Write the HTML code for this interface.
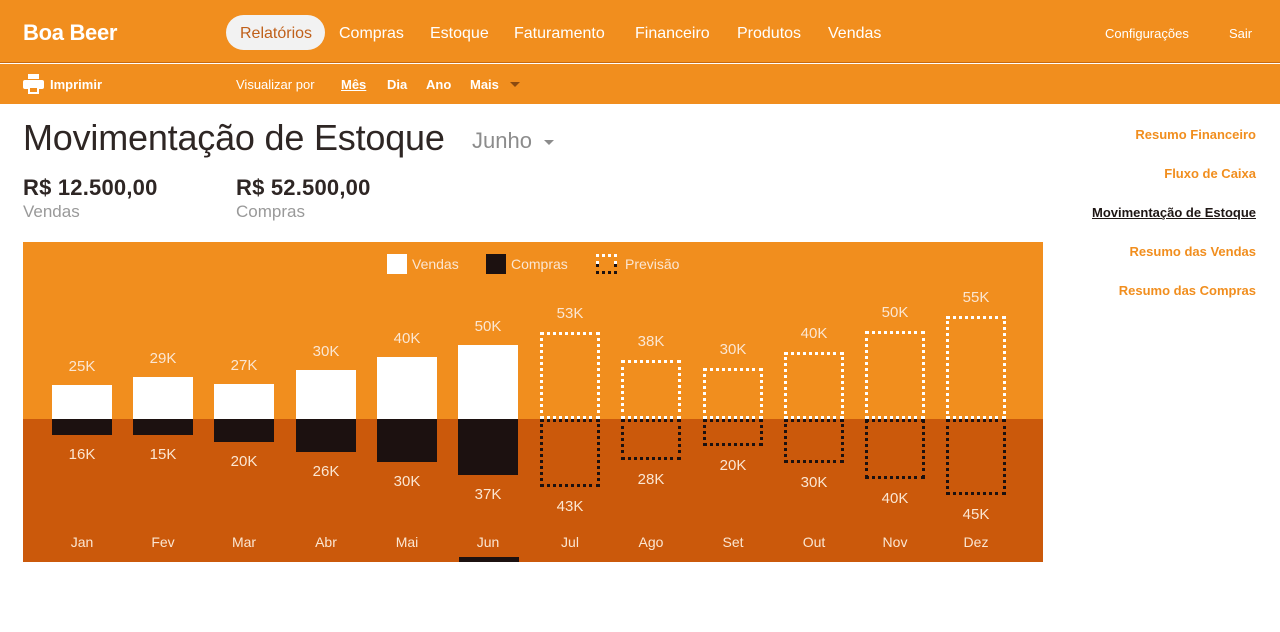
<!DOCTYPE html>
<html><head><meta charset="utf-8"><style>
*{margin:0;padding:0;box-sizing:border-box}
body{width:1280px;height:632px;background:#fff;font-family:"Liberation Sans",sans-serif;position:relative;overflow:hidden}
.a{position:absolute;white-space:nowrap}
#top{position:absolute;left:0;top:0;width:1280px;height:63px;background:#f18e1e;border-bottom:1px solid #c86a10}
#sub{position:absolute;left:0;top:64px;width:1280px;height:40px;background:#f18e1e}
.nav{color:#fff;font-size:16px;top:25px}
.sb{color:#fff;font-size:13px;font-weight:bold;top:77px}
#chart{position:absolute;left:23px;top:242px;width:1020px;height:320px;background:#f18e1e;overflow:hidden}
#low{position:absolute;left:0;top:177px;width:1020px;height:143px;background:#cb590b}
.bar{position:absolute;width:60px}
.lb{position:absolute;width:80px;text-align:center;color:#fbe6d2;font-size:15px;line-height:18px}
.ml{position:absolute;width:80px;text-align:center;color:#fbe6d2;font-size:14px;top:292px}
.rl{right:24px;font-size:13px;font-weight:bold;color:#f18e1e}
</style></head><body>
<div id="top"></div><div id="sub"></div>
<div class="a" style="left:23px;top:20px;color:#fff;font-size:22px;font-weight:bold;letter-spacing:-0.3px">Boa Beer</div>
<div class="a" style="left:226px;top:15px;width:99px;height:35px;border-radius:18px;background:#f2f2f2"></div>
<div class="a nav" style="left:240px;color:#c0601a">Relatórios</div>
<div class="a nav" style="left:339px">Compras</div>
<div class="a nav" style="left:430px">Estoque</div>
<div class="a nav" style="left:514px">Faturamento</div>
<div class="a nav" style="left:635px">Financeiro</div>
<div class="a nav" style="left:737px">Produtos</div>
<div class="a nav" style="left:828px">Vendas</div>
<div class="a" style="left:1105px;top:26px;color:#fff;font-size:13px">Configurações</div>
<div class="a" style="left:1229px;top:26px;color:#fff;font-size:13px">Sair</div>
<svg class="a" style="left:23px;top:74px" width="21" height="20" viewBox="0 0 21 20"><rect x="5" y="0" width="11" height="5" fill="#fff"/><rect x="0" y="6" width="21" height="9" rx="2" fill="#fff"/><rect x="5" y="12" width="11" height="8" fill="#fff"/><rect x="7" y="14" width="7" height="4" fill="#f18e1e"/></svg>
<div class="a sb" style="left:50px">Imprimir</div>
<div class="a" style="left:236px;top:77px;color:#fff;font-size:13px">Visualizar por</div>
<div class="a sb" style="left:341px;text-decoration:underline">Mês</div>
<div class="a sb" style="left:387px">Dia</div>
<div class="a sb" style="left:426px">Ano</div>
<div class="a sb" style="left:470px">Mais</div>
<div class="a" style="left:510px;top:82px;border-left:5px solid transparent;border-right:5px solid transparent;border-top:5px solid #8a4a10"></div>

<div class="a" style="left:23px;top:117px;font-size:36px;color:#2e2624;letter-spacing:-0.2px">Movimentação de Estoque</div>
<div class="a" style="left:472px;top:128px;font-size:22px;color:#8c8c8c">Junho</div>
<div class="a" style="left:544px;top:140px;border-left:5px solid transparent;border-right:5px solid transparent;border-top:5px solid #8c8c8c"></div>
<div class="a" style="left:23px;top:175px;font-size:22px;font-weight:bold;color:#2e2624;letter-spacing:0.2px">R$ 12.500,00</div>
<div class="a" style="left:23px;top:202px;font-size:17px;color:#999">Vendas</div>
<div class="a" style="left:236px;top:175px;font-size:22px;font-weight:bold;color:#2e2624;letter-spacing:0.2px">R$ 52.500,00</div>
<div class="a" style="left:236px;top:202px;font-size:17px;color:#999">Compras</div>

<div class="a rl" style="top:127px">Resumo Financeiro</div>
<div class="a rl" style="top:166px">Fluxo de Caixa</div>
<div class="a rl" style="top:205px;color:#1e1614;text-decoration:underline">Movimentação de Estoque</div>
<div class="a rl" style="top:244px">Resumo das Vendas</div>
<div class="a rl" style="top:283px">Resumo das Compras</div>

<div id="chart"><div id="low"></div>
<div class="bar" style="left:364px;top:12px;width:20px;height:20px;background:#fff"></div>
<div class="a" style="left:389px;top:14px;color:#fbe6d2;font-size:14px">Vendas</div>
<div class="bar" style="left:463px;top:12px;width:20px;height:20px;background:#1c1110"></div>
<div class="a" style="left:488px;top:14px;color:#fbe6d2;font-size:14px">Compras</div>
<div class="bar" style="left:573px;top:12px;width:21px;height:10px;border:3px dotted #fff;border-bottom:none"></div>
<div class="bar" style="left:573px;top:22px;width:21px;height:10px;border:3px dotted #1c1110;border-top:none"></div>
<div class="a" style="left:602px;top:14px;color:#fbe6d2;font-size:14px">Previsão</div>
<div class="bar" style="left:436px;top:315px;height:5px;background:#1c1110"></div>
<div id="bars"></div>
</div>
<script>
var m=["Jan","Fev","Mar","Abr","Mai","Jun","Jul","Ago","Set","Out","Nov","Dez"],
c=[82,163,244,326,407,488,570,651,733,814,895,976],
vt=[385,377,384,370,357,345,332,360,368,352,331,316],
cb=[435,435,442,452,462,475,487,460,446,463,479,495],
vl=[25,29,27,30,40,50,53,38,30,40,50,55],cl=[16,15,20,26,30,37,43,28,20,30,40,45],h="";
for(var i=0;i<12;i++){var x=c[i]-23-30,ox=242,mid=419-ox;var t=vt[i]-ox,b=cb[i]-ox;
if(i<6){h+='<div class="bar" style="left:'+x+'px;top:'+t+'px;height:'+(mid-t)+'px;background:#fff"></div>';
h+='<div class="bar" style="left:'+x+'px;top:'+mid+'px;height:'+(b-mid)+'px;background:#1c1110"></div>';}
else{h+='<div class="bar" style="left:'+x+'px;top:'+t+'px;height:'+(mid-t)+'px;border:3px dotted #fff"></div>';
h+='<div class="bar" style="left:'+x+'px;top:'+mid+'px;height:'+(b-mid)+'px;border:3px dotted #1c1110"></div>';}
h+='<div class="lb" style="left:'+(x-10)+'px;top:'+(t-27)+'px">'+vl[i]+'K</div>';
h+='<div class="lb" style="left:'+(x-10)+'px;top:'+(b+11)+'px">'+cl[i]+'K</div>';
h+='<div class="ml" style="left:'+(x-10)+'px">'+m[i]+'</div>';}
document.getElementById("bars").innerHTML=h;
</script>
</body></html>
